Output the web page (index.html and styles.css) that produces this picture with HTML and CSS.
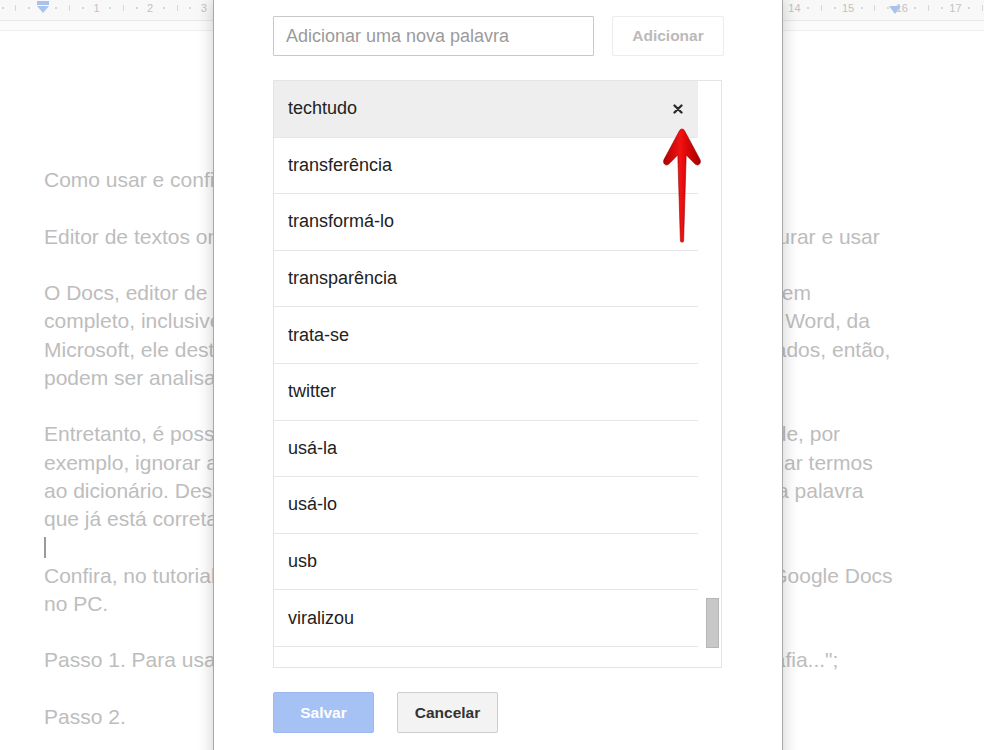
FILE: index.html
```html
<!DOCTYPE html>
<html lang="pt-BR">
<head>
<meta charset="utf-8">
<title>Dicionário pessoal</title>
<link rel="stylesheet" href="styles.css">
</head>
<body>
<header class="ruler">
  <div class="ruler-track">
    <span class="unit"><span class="num"></span><span class="dot"></span><span class="bar"></span><span class="dot"></span></span>
    <span class="unit"><span class="num"></span><span class="dot"></span><span class="bar"></span><span class="dot"></span></span>
    <span class="unit"><span class="num">1</span><span class="dot"></span><span class="bar"></span><span class="dot"></span></span>
    <span class="unit"><span class="num">2</span><span class="dot"></span><span class="bar"></span><span class="dot"></span></span>
    <span class="unit"><span class="num">3</span><span class="dot"></span><span class="bar"></span><span class="dot"></span></span>
    <span class="unit"><span class="num">4</span><span class="dot"></span><span class="bar"></span><span class="dot"></span></span>
    <span class="unit"><span class="num">5</span><span class="dot"></span><span class="bar"></span><span class="dot"></span></span>
    <span class="unit"><span class="num">6</span><span class="dot"></span><span class="bar"></span><span class="dot"></span></span>
    <span class="unit"><span class="num">7</span><span class="dot"></span><span class="bar"></span><span class="dot"></span></span>
    <span class="unit"><span class="num">8</span><span class="dot"></span><span class="bar"></span><span class="dot"></span></span>
    <span class="unit"><span class="num">9</span><span class="dot"></span><span class="bar"></span><span class="dot"></span></span>
    <span class="unit"><span class="num">10</span><span class="dot"></span><span class="bar"></span><span class="dot"></span></span>
    <span class="unit"><span class="num">11</span><span class="dot"></span><span class="bar"></span><span class="dot"></span></span>
    <span class="unit"><span class="num">12</span><span class="dot"></span><span class="bar"></span><span class="dot"></span></span>
    <span class="unit"><span class="num">13</span><span class="dot"></span><span class="bar"></span><span class="dot"></span></span>
    <span class="unit"><span class="num">14</span><span class="dot"></span><span class="bar"></span><span class="dot"></span></span>
    <span class="unit"><span class="num">15</span><span class="dot"></span><span class="bar"></span><span class="dot"></span></span>
    <span class="unit"><span class="num">16</span><span class="dot"></span><span class="bar"></span><span class="dot"></span></span>
    <span class="unit"><span class="num">17</span><span class="dot"></span><span class="bar"></span><span class="dot"></span></span>
  </div>
  <svg class="marker marker-left" width="14" height="14" viewBox="0 0 14 14" aria-hidden="true">
    <rect x="1" y="0" width="12" height="4" fill="#a9c3ec"/>
    <path d="M1 5 H13 L7 12 Z" fill="#a9c3ec"/>
  </svg>
  <svg class="marker marker-right" width="14" height="10" viewBox="0 0 14 10" aria-hidden="true">
    <path d="M1 0 H13 L7 8 Z" fill="#a9c3ec"/>
  </svg>
</header>
<div class="ruler-under"></div>

<main class="doc">
  <p>Como usar e configurar o dicionário do Google Docs</p>
  <p>Editor de textos online do Google tem um dicionário próprio; saiba como configurar e usar</p>
  <p>O Docs, editor de textos on-line do Google, tem um corretor ortográfico que é bem<br>completo, inclusive com a opção de criar um dicionário próprio. Assim como no Word, da<br>Microsoft, ele destaca os erros de digitação e de grafia, que ficam logo sublinhados, então,<br>podem ser analisados e corrigidos pelo usuário.</p>
  <p class="tight">Entretanto, é possível personalizar bem o corretor ortográfico. Há a possibilidade, por<br>exemplo, ignorar alguns dos alertas de erro de ortografia ou até mesmo adicionar termos<br>ao dicionário. Desse modo, o corretor do site deixa de marcar como errada uma palavra<br>que já está correta.</p>
  <p class="tight"><span class="caret"></span></p>
  <p>Confira, no tutorial a seguir, como ativar, usar e configurar o dicionário do seu Google Docs<br>no PC.</p>
  <p>Passo 1. Para usar o dicionário, abra o menu "Ferramentas" e escolha "Ortografia...";</p>
  <p>Passo 2.</p>
</main>

<div class="dialog" role="dialog" aria-label="Dicionário pessoal">
  <div class="add-row">
    <input class="word-input" type="text" placeholder="Adicionar uma nova palavra">
    <button class="btn-add" type="button">Adicionar</button>
  </div>

  <div class="list">
    <ul class="rows">
      <li class="row active"><span>techtudo</span>
        <svg class="remove" width="10" height="10" viewBox="0 0 10 10" aria-label="Remover"><path d="M1.5 1.5 L8.5 8.5 M8.5 1.5 L1.5 8.5" stroke="#2a2a2a" stroke-width="2.3" stroke-linecap="round"/></svg>
      </li>
      <li class="row"><span>transferência</span></li>
      <li class="row"><span>transformá-lo</span></li>
      <li class="row"><span>transparência</span></li>
      <li class="row"><span>trata-se</span></li>
      <li class="row"><span>twitter</span></li>
      <li class="row"><span>usá-la</span></li>
      <li class="row"><span>usá-lo</span></li>
      <li class="row"><span>usb</span></li>
      <li class="row"><span>viralizou</span></li>
      <li class="row cut"><span>visualização</span></li>
    </ul>
    <div class="scrollbar"><div class="thumb"></div></div>

    <svg class="arrow" width="40" height="120" viewBox="0 0 40 120" aria-hidden="true">
      <defs>
        <linearGradient id="red" x1="0" y1="0" x2="1" y2="0">
          <stop offset="0" stop-color="#b00000"/>
          <stop offset="0.45" stop-color="#f21414"/>
          <stop offset="0.6" stop-color="#e00808"/>
          <stop offset="1" stop-color="#a80000"/>
        </linearGradient>
      </defs>
      <path d="M20 2 C21.2 2 22 2.8 22.8 4.2 L38 32.5 C39.6 36 36.6 39.6 33.4 37.2 L24.2 28 L21.6 114 C21.2 115.6 18.8 115.6 18.4 114 L15.8 28 L6.6 37.2 C3.4 39.6 0.4 36 2 32.5 L17.2 4.2 C18 2.8 18.8 2 20 2 Z" fill="url(#red)" stroke="#9a0000" stroke-width="0.6"/>
    </svg>
  </div>

  <div class="actions">
    <button class="btn btn-primary" type="button">Salvar</button>
    <button class="btn btn-secondary" type="button">Cancelar</button>
  </div>
</div>
</body>
</html>
```

FILE: styles.css
```css
html, body {
  margin: 0;
  height: 750px;
  overflow: hidden;
  background: #fff;
  font-family: "Liberation Sans", Arial, sans-serif;
}

/* ---------- ruler ---------- */
.ruler {
  position: relative;
  height: 20px;
  background: #f8f8f8;
  border-bottom: 1px solid #e9e9e9;
  overflow: hidden;
}
.ruler-track {
  display: flex;
  height: 100%;
  margin-left: -17.6px;
}
.unit {
  flex: none;
  width: 53.7px;
  display: grid;
  grid-template-columns: repeat(4, 1fr);
  align-items: center;
  justify-items: center;
  padding-bottom: 4px;
  box-sizing: border-box;
}
.num {
  font-size: 11px;
  line-height: 12px;
  color: #c2c2c2;
}
.dot {
  width: 2px;
  height: 2px;
  background: #d6d6d6;
}
.bar {
  width: 1px;
  height: 6px;
  background: #d6d6d6;
}
.marker {
  position: absolute;
  top: 1px;
}
.marker-left { left: 36px; }
.marker-right { left: 888px; top: 6px; }

.ruler-under {
  height: 9px;
  background: #fbfbfb;
  border-bottom: 1px solid #efefef;
}

/* ---------- document ---------- */
.doc {
  padding: 135px 0 0 44px;
  font-size: 21px;
  line-height: 28.26px;
  color: #bdbdbd;
}
.doc p {
  margin: 0 0 28.26px;
  white-space: nowrap;
}
.doc p.tight { margin-bottom: 0; }
.caret {
  display: inline-block;
  width: 2px;
  height: 21px;
  background: #9a9a9a;
  vertical-align: -4px;
}

/* ---------- dialog ---------- */
.dialog {
  position: absolute;
  left: 213px;
  top: -4px;
  width: 570px;
  height: 780px;
  box-sizing: border-box;
  padding: 19px 0 0 59px;
  background: #fff;
  border: 1px solid #a8a8a8;
  box-shadow: 0 4px 16px rgba(0, 0, 0, 0.2);
}

.add-row {
  display: flex;
  gap: 18px;
}
.word-input {
  width: 321px;
  height: 40px;
  box-sizing: border-box;
  border: 1px solid #c9c9c9;
  border-radius: 1px;
  padding: 0 12px;
  margin: 0;
  font-family: "Liberation Sans", Arial, sans-serif;
  font-size: 18px;
  color: #222;
  outline: none;
}
.word-input::placeholder { color: #9b9b9b; }

.btn-add {
  width: 112px;
  height: 40px;
  margin: 0;
  background: #fff;
  border: 1px solid #ececec;
  border-radius: 2px;
  font-family: "Liberation Sans", Arial, sans-serif;
  font-weight: bold;
  font-size: 15.5px;
  color: #bababa;
}

.list {
  position: relative;
  display: flex;
  margin-top: 24px;
  width: 449px;
  height: 588px;
  box-sizing: border-box;
  border: 1px solid #e4e4e4;
}
.rows {
  flex: 1;
  margin: 0;
  padding: 0;
  list-style: none;
  overflow: hidden;
}
.row {
  height: 56.6px;
  box-sizing: border-box;
  display: flex;
  align-items: center;
  justify-content: space-between;
  padding: 0 14px;
  border-bottom: 1px solid #e6e6e6;
  font-size: 18px;
  color: #222;
}
.row.active { background: #eeeeee; }
.row.cut { align-items: flex-start; padding-top: 17px; }
.remove { margin-right: 1px; }

.scrollbar {
  flex: none;
  width: 23px;
}
.thumb {
  margin: 517px 0 0 8px;
  width: 13px;
  height: 50px;
  box-sizing: border-box;
  background: #c8c8c8;
  border: 1px solid #b6b6b6;
}

.arrow {
  position: absolute;
  left: 388px;
  top: 46px;
}

.actions {
  display: flex;
  gap: 23px;
  margin-top: 24px;
}
.btn {
  width: 101px;
  height: 41px;
  margin: 0;
  border-radius: 2px;
  font-family: "Liberation Sans", Arial, sans-serif;
  font-weight: bold;
  font-size: 15.5px;
}
.btn-primary {
  background: #a6c1f4;
  border: 1px solid #9cb8ef;
  color: #fff;
}
.btn-secondary {
  background: #f3f3f3;
  border: 1px solid #cdcdcd;
  color: #333;
}
```
